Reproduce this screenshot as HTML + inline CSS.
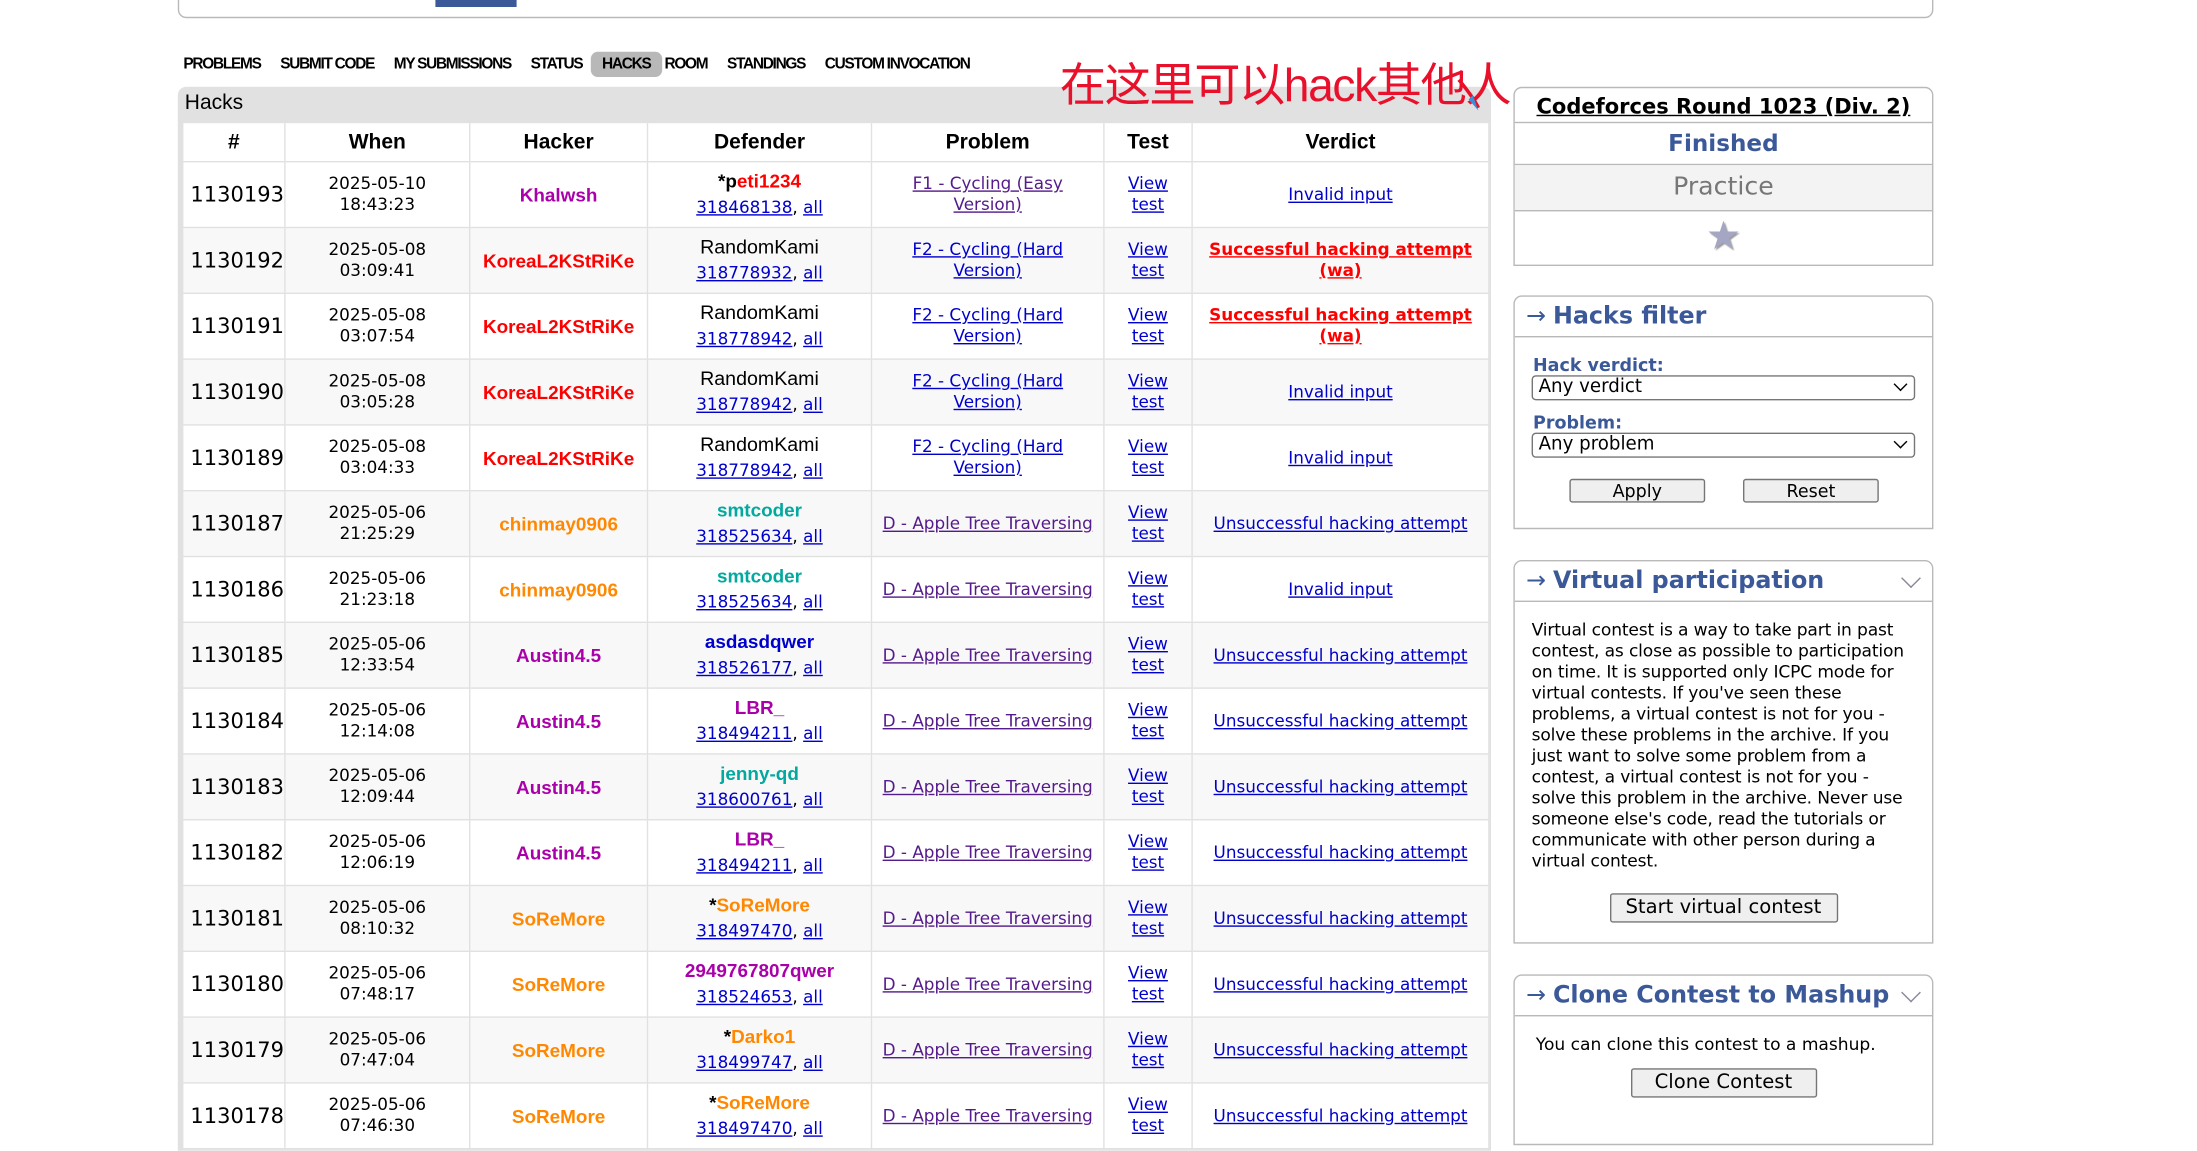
<!DOCTYPE html>
<html><head><meta charset="utf-8">
<style>
html,body{margin:0;padding:0;background:#fff;overflow:hidden}
body{width:2197px;height:1127px}
#w{position:absolute;left:0;top:0;width:1570px;height:805px;transform:scale(1.400);transform-origin:0 0;font-family:"DejaVu Sans","Liberation Sans",sans-serif;color:#000}
.abs{position:absolute}
.topbox{left:127px;top:-10px;width:1252px;height:21px;border:1px solid #b9b9b9;border-radius:0 0 6px 6px}
.nav{left:127px;top:37px;font-family:"Liberation Sans",sans-serif;font-weight:bold;font-size:11px;letter-spacing:-0.9px;display:flex}
.nav span{padding:3px 4px;margin-right:10px;margin-left:-4px}
.nav .sel{background:#b8b8b8;border-radius:5px;padding:3px 8px 3px 8px;margin-left:-8px;margin-right:2px}
.hb{left:127px;top:62px;width:938px;height:760px;background:#e1e1e1;border-radius:6px 6px 0 0}
.hb .t{position:absolute;left:5px;top:3px;font-size:15px;font-family:"Liberation Sans",sans-serif}
table{position:absolute;left:130px;top:88px;width:933px;border-collapse:collapse;background:#fff;font-size:12px;table-layout:fixed}
td,th{border:1px solid #e1e1e1;text-align:center;padding:0;line-height:15px}
th{height:27px;font-size:15px;font-family:"Liberation Sans",sans-serif;font-weight:bold;border-top:none}
tr.r td{height:46px}
tr.r:nth-child(odd) td{background:#f8f8f8}
td.id{font-size:15px;text-align:left;padding-left:5px}
a{color:#00c;text-decoration:underline}
a.v{color:#551a8b}
.b{font-weight:bold;font-size:13.5px;font-family:"Liberation Sans",sans-serif}
.d{font-size:14px;font-family:"Liberation Sans",sans-serif}
.nm{display:inline-block;margin-bottom:4px}
.red{color:#f00}.pur{color:#a0a}.org{color:#f80}.teal{color:#03a89e}.blu{color:#00c}
.succ{color:#f00;font-weight:bold;font-size:12px}
.sb{position:absolute;left:1081px;width:298px;border:1px solid #b9b9b9;border-radius:6px 6px 0 0;background:#fff}
.hd{height:28px;border-bottom:1px solid #b9b9b9;color:#3b5998;font-weight:bold;font-size:17px;padding-left:8px;line-height:28px;position:relative}
.hd .ar{font-size:17px;font-weight:normal;margin-right:5px}
.chev{position:absolute;right:10px;top:7px;width:9px;height:9px;border-right:1.3px solid #889;border-bottom:1.3px solid #889;transform:rotate(45deg)}
.btn{display:inline-block;border:1px solid #767676;background:#efefef;border-radius:2px;text-align:center}
.sel2{border:1px solid #767676;border-radius:3px;height:16px;font-size:13px;line-height:16px;padding-left:4px;position:relative;margin:0 12px}
.sel2:after{content:"";position:absolute;right:6px;top:2px;width:6px;height:6px;border-right:1.5px solid #000;border-bottom:1.5px solid #000;transform:rotate(45deg)}
.lab{color:#3b5998;font-weight:bold;font-size:12.5px;margin:0 13px}
</style></head><body><div id="w">
<div class="abs topbox"></div>
<div class="abs" style="left:311px;top:0;width:58px;height:5px;background:#3b5998"></div>
<div class="abs nav"><span style="margin-left:0">PROBLEMS</span><span>SUBMIT CODE</span><span>MY SUBMISSIONS</span><span>STATUS</span><span class="sel">HACKS</span><span>ROOM</span><span>STANDINGS</span><span>CUSTOM INVOCATION</span></div>
<div class="abs hb"><div class="t">Hacks</div></div>
<table>
<colgroup><col style="width:73px"><col style="width:132px"><col style="width:127px"><col style="width:160px"><col style="width:166px"><col style="width:63px"><col style="width:212px"></colgroup>
<tr><th>#</th><th>When</th><th>Hacker</th><th>Defender</th><th>Problem</th><th>Test</th><th>Verdict</th></tr>
<tr class="r"><td class="id">1130193</td><td>2025-05-10<br>18:43:23</td><td class="b pur">Khalwsh</td><td><span class="b nm">*p<span class="red">eti1234</span></span><br><a>318468138</a>, <a>all</a></td><td><a class="v">F1 - Cycling (Easy<br>Version)</a></td><td><a>View<br>test</a></td><td><a>Invalid input</a></td></tr>
<tr class="r"><td class="id">1130192</td><td>2025-05-08<br>03:09:41</td><td class="b red">KoreaL2KStRiKe</td><td><span class="d nm">RandomKami</span><br><a>318778932</a>, <a>all</a></td><td><a>F2 - Cycling (Hard<br>Version)</a></td><td><a>View<br>test</a></td><td><a class="succ">Successful hacking attempt<br>(wa)</a></td></tr>
<tr class="r"><td class="id">1130191</td><td>2025-05-08<br>03:07:54</td><td class="b red">KoreaL2KStRiKe</td><td><span class="d nm">RandomKami</span><br><a>318778942</a>, <a>all</a></td><td><a>F2 - Cycling (Hard<br>Version)</a></td><td><a>View<br>test</a></td><td><a class="succ">Successful hacking attempt<br>(wa)</a></td></tr>
<tr class="r"><td class="id">1130190</td><td>2025-05-08<br>03:05:28</td><td class="b red">KoreaL2KStRiKe</td><td><span class="d nm">RandomKami</span><br><a>318778942</a>, <a>all</a></td><td><a>F2 - Cycling (Hard<br>Version)</a></td><td><a>View<br>test</a></td><td><a>Invalid input</a></td></tr>
<tr class="r"><td class="id">1130189</td><td>2025-05-08<br>03:04:33</td><td class="b red">KoreaL2KStRiKe</td><td><span class="d nm">RandomKami</span><br><a>318778942</a>, <a>all</a></td><td><a>F2 - Cycling (Hard<br>Version)</a></td><td><a>View<br>test</a></td><td><a>Invalid input</a></td></tr>
<tr class="r"><td class="id">1130187</td><td>2025-05-06<br>21:25:29</td><td class="b org">chinmay0906</td><td><span class="b teal nm">smtcoder</span><br><a>318525634</a>, <a>all</a></td><td><a class="v">D - Apple Tree Traversing</a></td><td><a>View<br>test</a></td><td><a>Unsuccessful hacking attempt</a></td></tr>
<tr class="r"><td class="id">1130186</td><td>2025-05-06<br>21:23:18</td><td class="b org">chinmay0906</td><td><span class="b teal nm">smtcoder</span><br><a>318525634</a>, <a>all</a></td><td><a class="v">D - Apple Tree Traversing</a></td><td><a>View<br>test</a></td><td><a>Invalid input</a></td></tr>
<tr class="r"><td class="id">1130185</td><td>2025-05-06<br>12:33:54</td><td class="b pur">Austin4.5</td><td><span class="b blu nm">asdasdqwer</span><br><a>318526177</a>, <a>all</a></td><td><a class="v">D - Apple Tree Traversing</a></td><td><a>View<br>test</a></td><td><a>Unsuccessful hacking attempt</a></td></tr>
<tr class="r"><td class="id">1130184</td><td>2025-05-06<br>12:14:08</td><td class="b pur">Austin4.5</td><td><span class="b pur nm">LBR_</span><br><a>318494211</a>, <a>all</a></td><td><a class="v">D - Apple Tree Traversing</a></td><td><a>View<br>test</a></td><td><a>Unsuccessful hacking attempt</a></td></tr>
<tr class="r"><td class="id">1130183</td><td>2025-05-06<br>12:09:44</td><td class="b pur">Austin4.5</td><td><span class="b teal nm">jenny-qd</span><br><a>318600761</a>, <a>all</a></td><td><a class="v">D - Apple Tree Traversing</a></td><td><a>View<br>test</a></td><td><a>Unsuccessful hacking attempt</a></td></tr>
<tr class="r"><td class="id">1130182</td><td>2025-05-06<br>12:06:19</td><td class="b pur">Austin4.5</td><td><span class="b pur nm">LBR_</span><br><a>318494211</a>, <a>all</a></td><td><a class="v">D - Apple Tree Traversing</a></td><td><a>View<br>test</a></td><td><a>Unsuccessful hacking attempt</a></td></tr>
<tr class="r"><td class="id">1130181</td><td>2025-05-06<br>08:10:32</td><td class="b org">SoReMore</td><td><span class="b nm">*<span class="org">SoReMore</span></span><br><a>318497470</a>, <a>all</a></td><td><a class="v">D - Apple Tree Traversing</a></td><td><a>View<br>test</a></td><td><a>Unsuccessful hacking attempt</a></td></tr>
<tr class="r"><td class="id">1130180</td><td>2025-05-06<br>07:48:17</td><td class="b org">SoReMore</td><td><span class="b pur nm">2949767807qwer</span><br><a>318524653</a>, <a>all</a></td><td><a class="v">D - Apple Tree Traversing</a></td><td><a>View<br>test</a></td><td><a>Unsuccessful hacking attempt</a></td></tr>
<tr class="r"><td class="id">1130179</td><td>2025-05-06<br>07:47:04</td><td class="b org">SoReMore</td><td><span class="b nm">*<span class="org">Darko1</span></span><br><a>318499747</a>, <a>all</a></td><td><a class="v">D - Apple Tree Traversing</a></td><td><a>View<br>test</a></td><td><a>Unsuccessful hacking attempt</a></td></tr>
<tr class="r"><td class="id">1130178</td><td>2025-05-06<br>07:46:30</td><td class="b org">SoReMore</td><td><span class="b nm">*<span class="org">SoReMore</span></span><br><a>318497470</a>, <a>all</a></td><td><a class="v">D - Apple Tree Traversing</a></td><td><a>View<br>test</a></td><td><a>Unsuccessful hacking attempt</a></td></tr>
</table>

<div class="abs" style="left:757px;top:34px;color:#e8102a;font-size:33px;font-family:'Liberation Sans','Noto Sans CJK SC',sans-serif;white-space:nowrap;letter-spacing:-1px">在这里可以hack其他人</div>
<svg class="abs" style="left:1040px;top:55px" width="30" height="30"><path d="M2 2 Q12 14 16 22" stroke="#e8102a" stroke-width="2.5" fill="none"/><path d="M9 16 L16 24 L12 13 Z" fill="#3a8fd8"/></svg>

<div class="sb" style="top:62px;height:126px">
<div style="height:24px;border-bottom:1px solid #b9b9b9;text-align:center;font-weight:bold;font-size:15px;line-height:26px"><u>Codeforces Round 1023 (Div. 2)</u></div>
<div style="height:29px;border-bottom:1px solid #b9b9b9;text-align:center;font-weight:bold;font-size:16.5px;line-height:29px;color:#3b5998">Finished</div>
<div style="height:32px;border-bottom:1px solid #b9b9b9;text-align:center;font-size:18px;line-height:32px;color:#777;background:#f3f3f3">Practice</div>
<div style="text-align:center;font-size:28px;line-height:36px;color:#a4a6c4;text-shadow:1px 1px 1px #999">★</div>
</div>

<div class="sb" style="top:211px;height:165px">
<div class="hd"><span class="ar">→</span>Hacks filter</div>
<div class="lab" style="margin-top:12px">Hack verdict:</div>
<div class="sel2">Any verdict</div>
<div class="lab" style="margin-top:8px">Problem:</div>
<div class="sel2">Any problem</div>
<div style="margin-top:15px;font-size:12.5px"><span class="btn" style="margin-left:39px;width:95px">Apply</span><span class="btn" style="margin-left:27px;width:95px">Reset</span></div>
</div>

<div class="sb" style="top:400px;height:272px">
<div class="hd"><span class="ar">→</span>Virtual participation<div class="chev"></div></div>
<div style="font-size:12.2px;line-height:15px;padding:13px 12px 0 12px;letter-spacing:-0.1px">Virtual contest is a way to take part in past contest, as close as possible to participation on time. It is supported only ICPC mode for virtual contests. If you've seen these problems, a virtual contest is not for you - solve these problems in the archive. If you just want to solve some problem from a contest, a virtual contest is not for you - solve this problem in the archive. Never use someone else's code, read the tutorials or communicate with other person during a virtual contest.</div>
<div style="margin-top:14px;text-align:center"><span class="btn" style="width:161px;font-size:14px;line-height:19px">Start virtual contest</span></div>
</div>

<div class="sb" style="top:696px;height:120px">
<div class="hd"><span class="ar">→</span>Clone Contest to Mashup<div class="chev"></div></div>
<div style="font-size:12.2px;padding:13px 15px 0 15px">You can clone this contest to a mashup.</div>
<div style="margin-top:9px;text-align:center"><span class="btn" style="width:131px;font-size:14px;line-height:19px">Clone Contest</span></div>
</div>
</div></body></html>
